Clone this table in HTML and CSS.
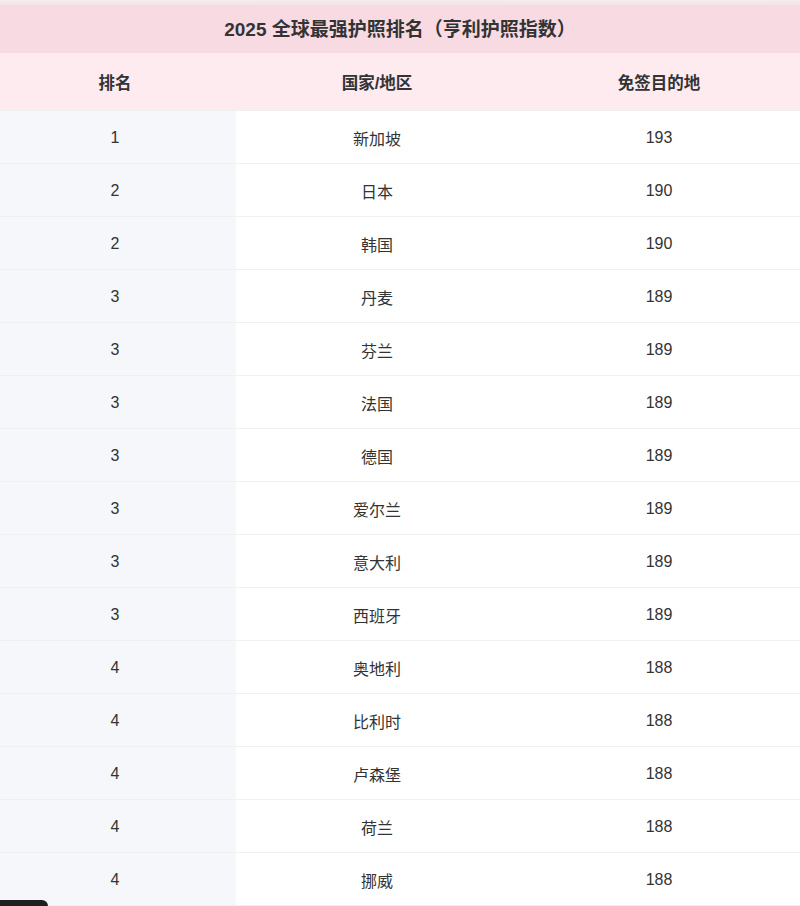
FILE: index.html
```html
<!DOCTYPE html>
<html lang="zh-CN">
<head>
<meta charset="utf-8">
<title>2025 全球最强护照排名</title>
<link rel="stylesheet" href="styles.css">
</head>
<body>
<div class="top-edge"></div>
<table class="rank-table">
  <colgroup>
    <col class="c1">
    <col class="c2">
    <col class="c3">
  </colgroup>
  <thead>
    <tr class="title-row"><th colspan="3">2025 全球最强护照排名（亨利护照指数）</th></tr>
    <tr class="head-row"><th>排名</th><th>国家/地区</th><th>免签目的地</th></tr>
  </thead>
  <tbody>
    <tr><td>1</td><td>新加坡</td><td>193</td></tr>
    <tr><td>2</td><td>日本</td><td>190</td></tr>
    <tr><td>2</td><td>韩国</td><td>190</td></tr>
    <tr><td>3</td><td>丹麦</td><td>189</td></tr>
    <tr><td>3</td><td>芬兰</td><td>189</td></tr>
    <tr><td>3</td><td>法国</td><td>189</td></tr>
    <tr><td>3</td><td>德国</td><td>189</td></tr>
    <tr><td>3</td><td>爱尔兰</td><td>189</td></tr>
    <tr><td>3</td><td>意大利</td><td>189</td></tr>
    <tr><td>3</td><td>西班牙</td><td>189</td></tr>
    <tr><td>4</td><td>奥地利</td><td>188</td></tr>
    <tr><td>4</td><td>比利时</td><td>188</td></tr>
    <tr><td>4</td><td>卢森堡</td><td>188</td></tr>
    <tr><td>4</td><td>荷兰</td><td>188</td></tr>
    <tr><td>4</td><td>挪威</td><td>188</td></tr>
  </tbody>
</table>
<div class="toast-edge"></div>
</body>
</html>
```
FILE: styles.css
```css
html, body {
  margin: 0;
  padding: 0;
  background: #ffffff;
  overflow: hidden;
}
body {
  font-family: "Liberation Sans", "Noto Sans CJK SC", sans-serif;
  color: #333333;
  height: 906px;
  position: relative;
}
.top-edge {
  height: 5px;
  background: linear-gradient(#f2eef0, #f7e3e9);
}
.rank-table {
  width: 800px;
  border-collapse: separate;
  border-spacing: 0;
  table-layout: fixed;
}
.c1 { width: 236px; }
.c2 { width: 282px; }
.c3 { width: 282px; }
.title-row { height: 48px; }
.title-row th {
  padding: 0 0 4px 0;
  background: #f8dae3;
  font-size: 19px;
  font-weight: 600;
  color: #333333;
  text-align: center;
}
.head-row { height: 58px; }
.head-row th {
  padding: 0;
  background: #fdebf0;
  font-size: 16.5px;
  font-weight: 600;
  color: #333333;
  text-align: center;
  border-bottom: 1px solid #eeeeee;
}
.head-row th:first-child {
  padding-right: 6px;
}
.rank-table tbody tr { height: 53px; }
.rank-table td {
  padding: 2px 0 0 0;
  text-align: center;
  font-size: 16px;
  color: #333333;
  border-bottom: 1px solid #f0f0f0;
}
.rank-table td:first-child {
  background: #f5f7fa;
  padding-right: 6px;
}
.toast-edge {
  position: absolute;
  left: 0;
  top: 900px;
  width: 48px;
  height: 12px;
  background: #1e1e1e;
  border-top-right-radius: 6px;
}
```
